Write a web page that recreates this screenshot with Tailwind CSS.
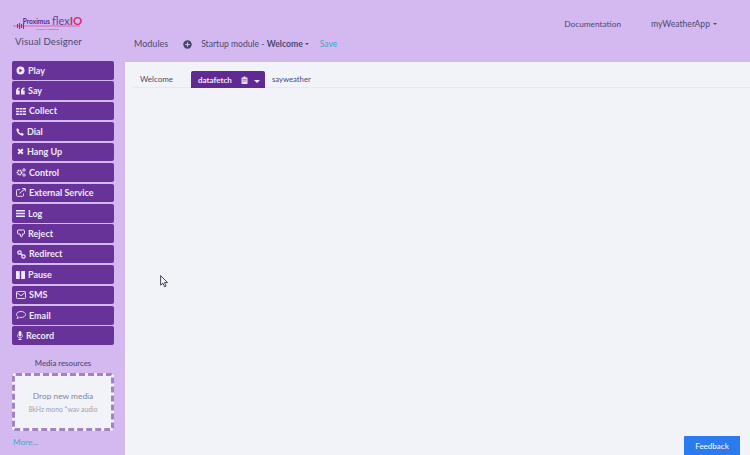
<!DOCTYPE html>
<html>
<head>
<meta charset="UTF-8">
<title>Visual Designer</title>
<script src="https://cdn.jsdelivr.net/npm/@tailwindcss/browser@4"></script>
</head>
<body class="w-[750px] h-[455px] overflow-hidden relative bg-[#d4b9f1] font-['Lato',sans-serif] text-[#4a4a72]">
  <!-- top bar -->
  <header class="h-[62px] flex">
    <div class="w-[125px] shrink-0 pl-[13px] pt-[14px]">
      <svg width="72" height="18" viewBox="0 0 72 18" class="block">
        <path d="M0 12H67" stroke="#d9408f" stroke-width="0.7"/>
        <path d="M4.500 10v4M6.500 9v6M8.500 10v4M10.500 9v6" stroke="#c2186b" stroke-width="1.100"/>
        <text x="9.700" y="9.500" font-family="Lato" font-size="6.600" font-weight="700" fill="#5c2a86">Proximus</text>
        <text x="39" y="11" font-family="Lato" font-size="11" fill="#6b3a9c">flex<tspan fill="#d32f6a" font-weight="700" font-size="11.500">IO</tspan></text>
        <text x="23" y="16" font-family="Lato" font-size="2.600" fill="#7a5a96">Flexible Automation</text>
      </svg>
      <div class="text-[9.6px] leading-[12px] mt-[4px] ml-[2px] tracking-[0.1px]">Visual Designer</div>
    </div>
    <div class="flex-1 relative flex">
      <div class="flex items-center h-[12px] mt-[38px] ml-[9px] text-[9px] whitespace-nowrap">
        <span>Modules</span>
        <svg width="9" height="9" viewBox="0 0 9 9" class="ml-[15px]"><circle cx="4.500" cy="4.500" r="4.200" fill="#45456b"/><path d="M4.500 2.200v4.600M2.200 4.500h4.600" stroke="#d4b9f1" stroke-width="1.200"/></svg>
        <span class="ml-[9px] text-[8.6px]">Startup module - <b class="font-bold">Welcome</b></span>
        <span class="ml-[2px] border-x-[2px] border-x-transparent border-t-[2px] border-t-[#4a4a72]"></span>
        <span class="ml-[11px] text-[8.5px] text-[#3aa8c6]">Save</span>
      </div>
      <div class="ml-auto flex items-start pt-[18px] text-[8.6px] leading-[12px] whitespace-nowrap">
        <span class="text-[8.3px]">Documentation</span>
        <span class="ml-[30px]">myWeatherApp</span>
        <span class="ml-[3px] mt-[5px] mr-[33px] border-x-[2px] border-x-transparent border-t-[2px] border-t-[#4a4a72]"></span>
      </div>
    </div>
  </header>

  <div class="flex h-[393px]">
    <!-- sidebar -->
    <aside class="w-[125px] shrink-0 px-[12px]">
      <ul class="flex flex-col -mt-[1px]">
        <li class="h-[20.43px]"><button class="w-[102px] h-[18.6px] bg-[#673399] rounded-[2px] flex items-center gap-[3px] pl-[4px] text-[9px] font-bold text-[#f0e8f8]">
          <svg width="9" height="9" viewBox="0 0 9 9"><circle cx="4.500" cy="4.500" r="4" fill="#f0e8f8"/><path d="M3.400 2.600l3 1.900-3 1.900z" fill="#673399"/></svg>Play</button></li>
        <li class="h-[20.43px]"><button class="w-[102px] h-[18.6px] bg-[#673399] rounded-[2px] flex items-center gap-[3px] pl-[4px] text-[9px] font-bold text-[#f0e8f8]">
          <svg width="9" height="8" viewBox="0 0 9 8" fill="#f0e8f8"><path d="M0 4.200C0 2 1.200.7 3.600.5v1.300C2.600 2 2.100 2.600 2.100 3.400h1.600V7.400H0zM5 4.200C5 2 6.200.7 8.600.5v1.300C7.600 2 7.100 2.600 7.100 3.400h1.600V7.400H5z"/></svg>Say</button></li>
        <li class="h-[20.43px]"><button class="w-[102px] h-[18.6px] bg-[#673399] rounded-[2px] flex items-center gap-[3px] pl-[4px] text-[9px] font-bold text-[#f0e8f8]">
          <svg width="10" height="7" viewBox="0 0 10 7" fill="#f0e8f8"><path d="M0 0h3v1.600H0zM3.500 0h3v1.600h-3zM7 0h3v1.600H7zM0 2.700h3v1.600H0zM3.500 2.700h3v1.600h-3zM7 2.700h3v1.600H7zM0 5.400h3V7H0zM3.500 5.400h3V7h-3zM7 5.400h3V7H7z"/></svg>Collect</button></li>
        <li class="h-[20.43px]"><button class="w-[102px] h-[18.6px] bg-[#673399] rounded-[2px] flex items-center gap-[3px] pl-[4px] text-[9px] font-bold text-[#f0e8f8]">
          <svg width="8" height="8" viewBox="0 0 8 8" fill="#f0e8f8"><path d="M1.700.3L.4 1C.1 3.800 3.400 7.700 7 7.700l.8-1.600-2-1.300-1 .8C3.800 5.100 2.900 4 2.500 3l.9-.8z"/></svg>Dial</button></li>
        <li class="h-[20.43px]"><button class="w-[102px] h-[18.6px] bg-[#673399] rounded-[2px] flex items-center gap-[3px] pl-[5px] text-[9px] font-bold text-[#f0e8f8]">
          <svg width="7" height="7" viewBox="0 0 7 7"><path d="M1.200 1.200l4.600 4.600M5.800 1.200L1.200 5.800" stroke="#f0e8f8" stroke-width="2"/></svg>Hang Up</button></li>
        <li class="h-[20.43px]"><button class="w-[102px] h-[18.6px] bg-[#673399] rounded-[2px] flex items-center gap-[3px] pl-[4px] text-[9px] font-bold text-[#f0e8f8]">
          <svg width="10" height="9" viewBox="0 0 10 9"><circle cx="3.500" cy="4.500" r="2.100" fill="none" stroke="#f0e8f8" stroke-width="1.700" stroke-dasharray="1.300 .5"/><circle cx="8" cy="2" r="1.200" fill="none" stroke="#f0e8f8" stroke-width="1"/><circle cx="8" cy="7" r="1.200" fill="none" stroke="#f0e8f8" stroke-width="1"/></svg>Control</button></li>
        <li class="h-[20.43px]"><button class="w-[102px] h-[18.6px] bg-[#673399] rounded-[2px] flex items-center gap-[3px] pl-[4px] text-[9px] font-bold text-[#f0e8f8]">
          <svg width="10" height="9" viewBox="0 0 10 9" fill="none" stroke="#f0e8f8"><path d="M7.500 5.500v2c0 .5-.3.8-.8.8H1.300c-.5 0-.8-.3-.8-.8V2.500c0-.5.3-.8.8-.8h3" stroke-width=".9"/><path d="M3.500 5.500L9 .8M6.300.6h3v2.800" stroke-width="1"/></svg>External Service</button></li>
        <li class="h-[20.43px]"><button class="w-[102px] h-[18.6px] bg-[#673399] rounded-[2px] flex items-center gap-[3px] pl-[4px] text-[9px] font-bold text-[#f0e8f8]">
          <svg width="9" height="7" viewBox="0 0 9 7" fill="#f0e8f8"><path d="M0 0h9v1.500H0zM0 2.700h9v1.500H0zM0 5.400h9V7H0z"/></svg>Log</button></li>
        <li class="h-[20.43px]"><button class="w-[102px] h-[18.6px] bg-[#673399] rounded-[2px] flex items-center gap-[3px] pl-[5px] text-[9px] font-bold text-[#f0e8f8]">
          <svg width="8" height="9" viewBox="0 0 8 9" fill="none" stroke="#f0e8f8" stroke-width="1"><path d="M1 1h5.500c.5 0 1 .5 1 1v2c0 .6-.4 1-1 1H5.500L5 7.500c-.1.500-1 .5-1.200 0L3 5H1.500C.8 5 .5 4.500.5 4V1.500z"/></svg>Reject</button></li>
        <li class="h-[20.43px]"><button class="w-[102px] h-[18.6px] bg-[#673399] rounded-[2px] flex items-center gap-[3px] pl-[5px] text-[9px] font-bold text-[#f0e8f8]">
          <svg width="9" height="9" viewBox="0 0 9 9" fill="none" stroke="#f0e8f8" stroke-width="1.200"><circle cx="2.500" cy="2.500" r="1.700"/><circle cx="6.500" cy="6.500" r="1.700"/><path d="M3.500 3.500l2 2"/></svg>Redirect</button></li>
        <li class="h-[20.43px]"><button class="w-[102px] h-[18.6px] bg-[#673399] rounded-[2px] flex items-center gap-[3px] pl-[4px] text-[9px] font-bold text-[#f0e8f8]">
          <svg width="9" height="8" viewBox="0 0 9 8" fill="#f0e8f8"><path d="M0 0h3.800v8H0zM5.200 0H9v8H5.200z"/></svg>Pause</button></li>
        <li class="h-[20.43px]"><button class="w-[102px] h-[18.6px] bg-[#673399] rounded-[2px] flex items-center gap-[3px] pl-[4px] text-[9px] font-bold text-[#f0e8f8]">
          <svg width="10" height="8" viewBox="0 0 10 8" fill="none" stroke="#f0e8f8" stroke-width=".9"><rect x=".5" y=".5" width="9" height="7" rx=".8"/><path d="M.8 1.500L5 4.800l4.200-3.300"/></svg>SMS</button></li>
        <li class="h-[20.43px]"><button class="w-[102px] h-[18.6px] bg-[#673399] rounded-[2px] flex items-center gap-[3px] pl-[4px] text-[9px] font-bold text-[#f0e8f8]">
          <svg width="10" height="8" viewBox="0 0 10 8" fill="none" stroke="#f0e8f8" stroke-width=".9"><path d="M5 .5c2.500 0 4.500 1.300 4.500 3S7.500 6.500 5 6.500c-.6 0-1 0-1.500-.2C2.800 7 1.800 7.400 1 7.500c.4-.5.8-1.200.8-1.800C1 5.100.5 4.300.5 3.500.5 1.800 2.500.5 5 .5z"/></svg>Email</button></li>
        <li class="h-[20.43px]"><button class="w-[102px] h-[18.6px] bg-[#673399] rounded-[2px] flex items-center gap-[3px] pl-[5px] text-[9px] font-bold text-[#f0e8f8]">
          <svg width="6" height="9" viewBox="0 0 6 9" fill="#f0e8f8"><rect x="1.500" y="0" width="3" height="5.500" rx="1.500"/><path d="M.4 3.500v1.200C.4 6 1.500 6.800 3 6.800s2.600-.8 2.600-2.100V3.500" fill="none" stroke="#f0e8f8" stroke-width=".7"/><path d="M2.600 6.800h.8V8h1.200v1H1.400V8h1.200z"/></svg>Record</button></li>
      </ul>
      <div class="text-[7.8px] leading-[10px] text-center mt-[11px] font-medium ml-[1px]">Media resources</div>
      <div class="mt-[5px] w-[102px] h-[58px] bg-[#f2f3f9] rounded-[4px] border-[3px] border-dashed border-[#a582c6] flex flex-col items-center justify-center">
        <div class="text-[8.4px] leading-[12px] text-[#85859b]">Drop new media</div>
        <div class="text-[6.8px] leading-[10px] text-[#a0a0b0] mt-[2px] whitespace-nowrap">8kHz mono *wav audio</div>
      </div>
      <div class="text-[8.2px] leading-[11px] text-[#4fa6c6] mt-[6px] ml-[1px]">More...</div>
    </aside>

    <!-- canvas -->
    <main class="flex-1 bg-[#f2f3f9] pt-[9px] pl-[8px]">
      <nav class="flex h-[17px] border-b border-[#e8e9ef] text-[8px] leading-[16px] whitespace-nowrap">
        <span class="w-[58px] pl-[7px]">Welcome</span>
        <span class="w-[74px] h-[17px] bg-[#5f2a91] rounded-t-[2px] text-[#f0e8f8] font-bold flex items-center pl-[7px]">
          datafetch
          <svg width="7" height="8" viewBox="0 0 7 8" class="ml-[9px]"><path d="M.5 1.500h6V8h-6z" fill="#e4d8ee"/><path d="M2.500 .5h2v1.500h-2z" fill="#f0e8f8"/><path d="M1.500 3.500h4M1.500 5h4" stroke="#5f2a91" stroke-width=".5"/></svg>
          <span class="ml-[6px] mt-[3px] border-x-[3px] border-x-transparent border-t-[3px] border-t-[#f0e8f8]"></span>
        </span>
        <span class="ml-[7px] text-[7.7px]">sayweather</span>
      </nav>
    </main>
  </div>

  <!-- mouse pointer in the capture -->
  <svg width="9" height="13" viewBox="0 0 9 13" class="absolute left-[160px] top-[275px]"><path d="M.6.600v9.600l2.300-2 1.600 3.600 1.600-.7-1.600-3.500h3.100z" fill="#f2f3f9" stroke="#333344" stroke-width=".9"/></svg>
  <button class="absolute right-[10px] bottom-0 w-[56px] h-[19px] bg-[#2b7bf0] rounded-tl-[1px] text-[8px] font-medium text-[#eef4ff]">Feedback</button>
</body>
</html>
